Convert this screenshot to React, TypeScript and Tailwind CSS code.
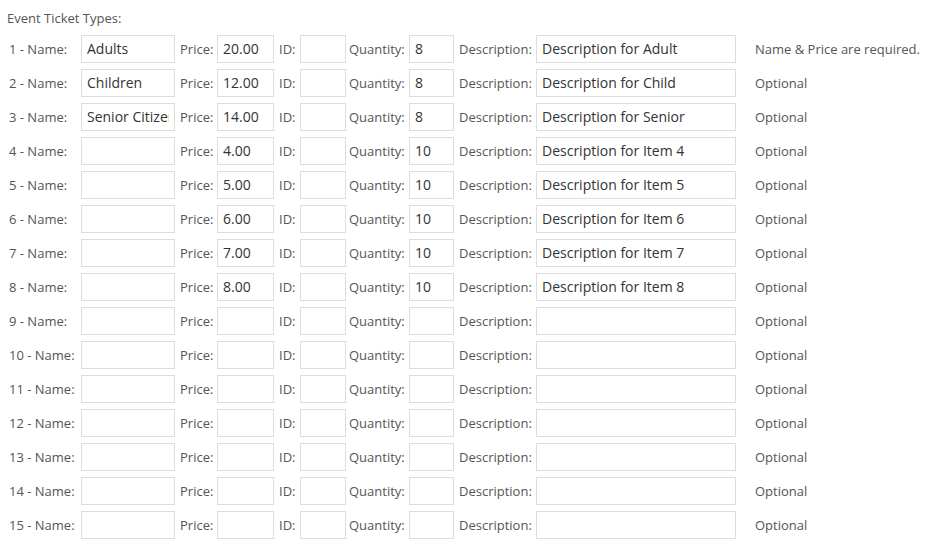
import React from 'react';

type Ticket = { name: string; price: string; qty: string; desc: string };

const filled: Ticket[] = [
  { name: 'Adults', price: '20.00', qty: '8', desc: 'Description for Adult' },
  { name: 'Children', price: '12.00', qty: '8', desc: 'Description for Child' },
  { name: 'Senior Citizen', price: '14.00', qty: '8', desc: 'Description for Senior' },
  { name: '', price: '4.00', qty: '10', desc: 'Description for Item 4' },
  { name: '', price: '5.00', qty: '10', desc: 'Description for Item 5' },
  { name: '', price: '6.00', qty: '10', desc: 'Description for Item 6' },
  { name: '', price: '7.00', qty: '10', desc: 'Description for Item 7' },
  { name: '', price: '8.00', qty: '10', desc: 'Description for Item 8' },
];

// pad out to 15 rows
const tickets: Ticket[] = Array.from({ length: 15 }, (_, i) => filled[i] ?? { name: '', price: '', qty: '', desc: '' });

const inputCls =
  'h-[28px] border border-[#dddddd] bg-white px-[5px] pb-[2px] text-[14px] text-[#333333] outline-none shrink-0';

const Field = ({ value, className }: { value: string; className: string }) => (
  <input readOnly defaultValue={value} className={`${inputCls} ${className}`} />
);

export default function App() {
  return (
    <div
      className="min-h-screen bg-white text-[13px] text-[#555555]"
      style={{ fontFamily: '"Open Sans", "Noto Sans", sans-serif' }}
    >
      <div className="pl-[7px] pt-[8px] leading-[20px]">Event Ticket Types:</div>
      <div className="mt-[7px] flex flex-col gap-[6px]">
        {tickets.map((t, i) => (
          <div key={i} className="flex items-center h-[28px] pt-[2px] whitespace-nowrap">
            <span className="w-[81px] pl-[9px] shrink-0">{i + 1} - Name:</span>
            <Field value={t.name} className="w-[94px] -mt-[2px]" />
            <span className="w-[42px] pl-[5px] shrink-0">Price:</span>
            <Field value={t.price} className="w-[57px] -mt-[2px]" />
            <span className="w-[26px] pl-[5px] shrink-0">ID:</span>
            <Field value="" className="w-[46px] -mt-[2px]" />
            <span className="w-[63px] pl-[3px] shrink-0">Quantity:</span>
            <Field value={t.qty} className="w-[45px] -mt-[2px]" />
            <span className="w-[82px] pl-[5px] shrink-0">Description:</span>
            <Field value={t.desc} className="w-[200px] -mt-[2px]" />
            <span className="pl-[19px]">{i === 0 ? 'Name & Price are required.' : 'Optional'}</span>
          </div>
        ))}
      </div>
    </div>
  );
}
